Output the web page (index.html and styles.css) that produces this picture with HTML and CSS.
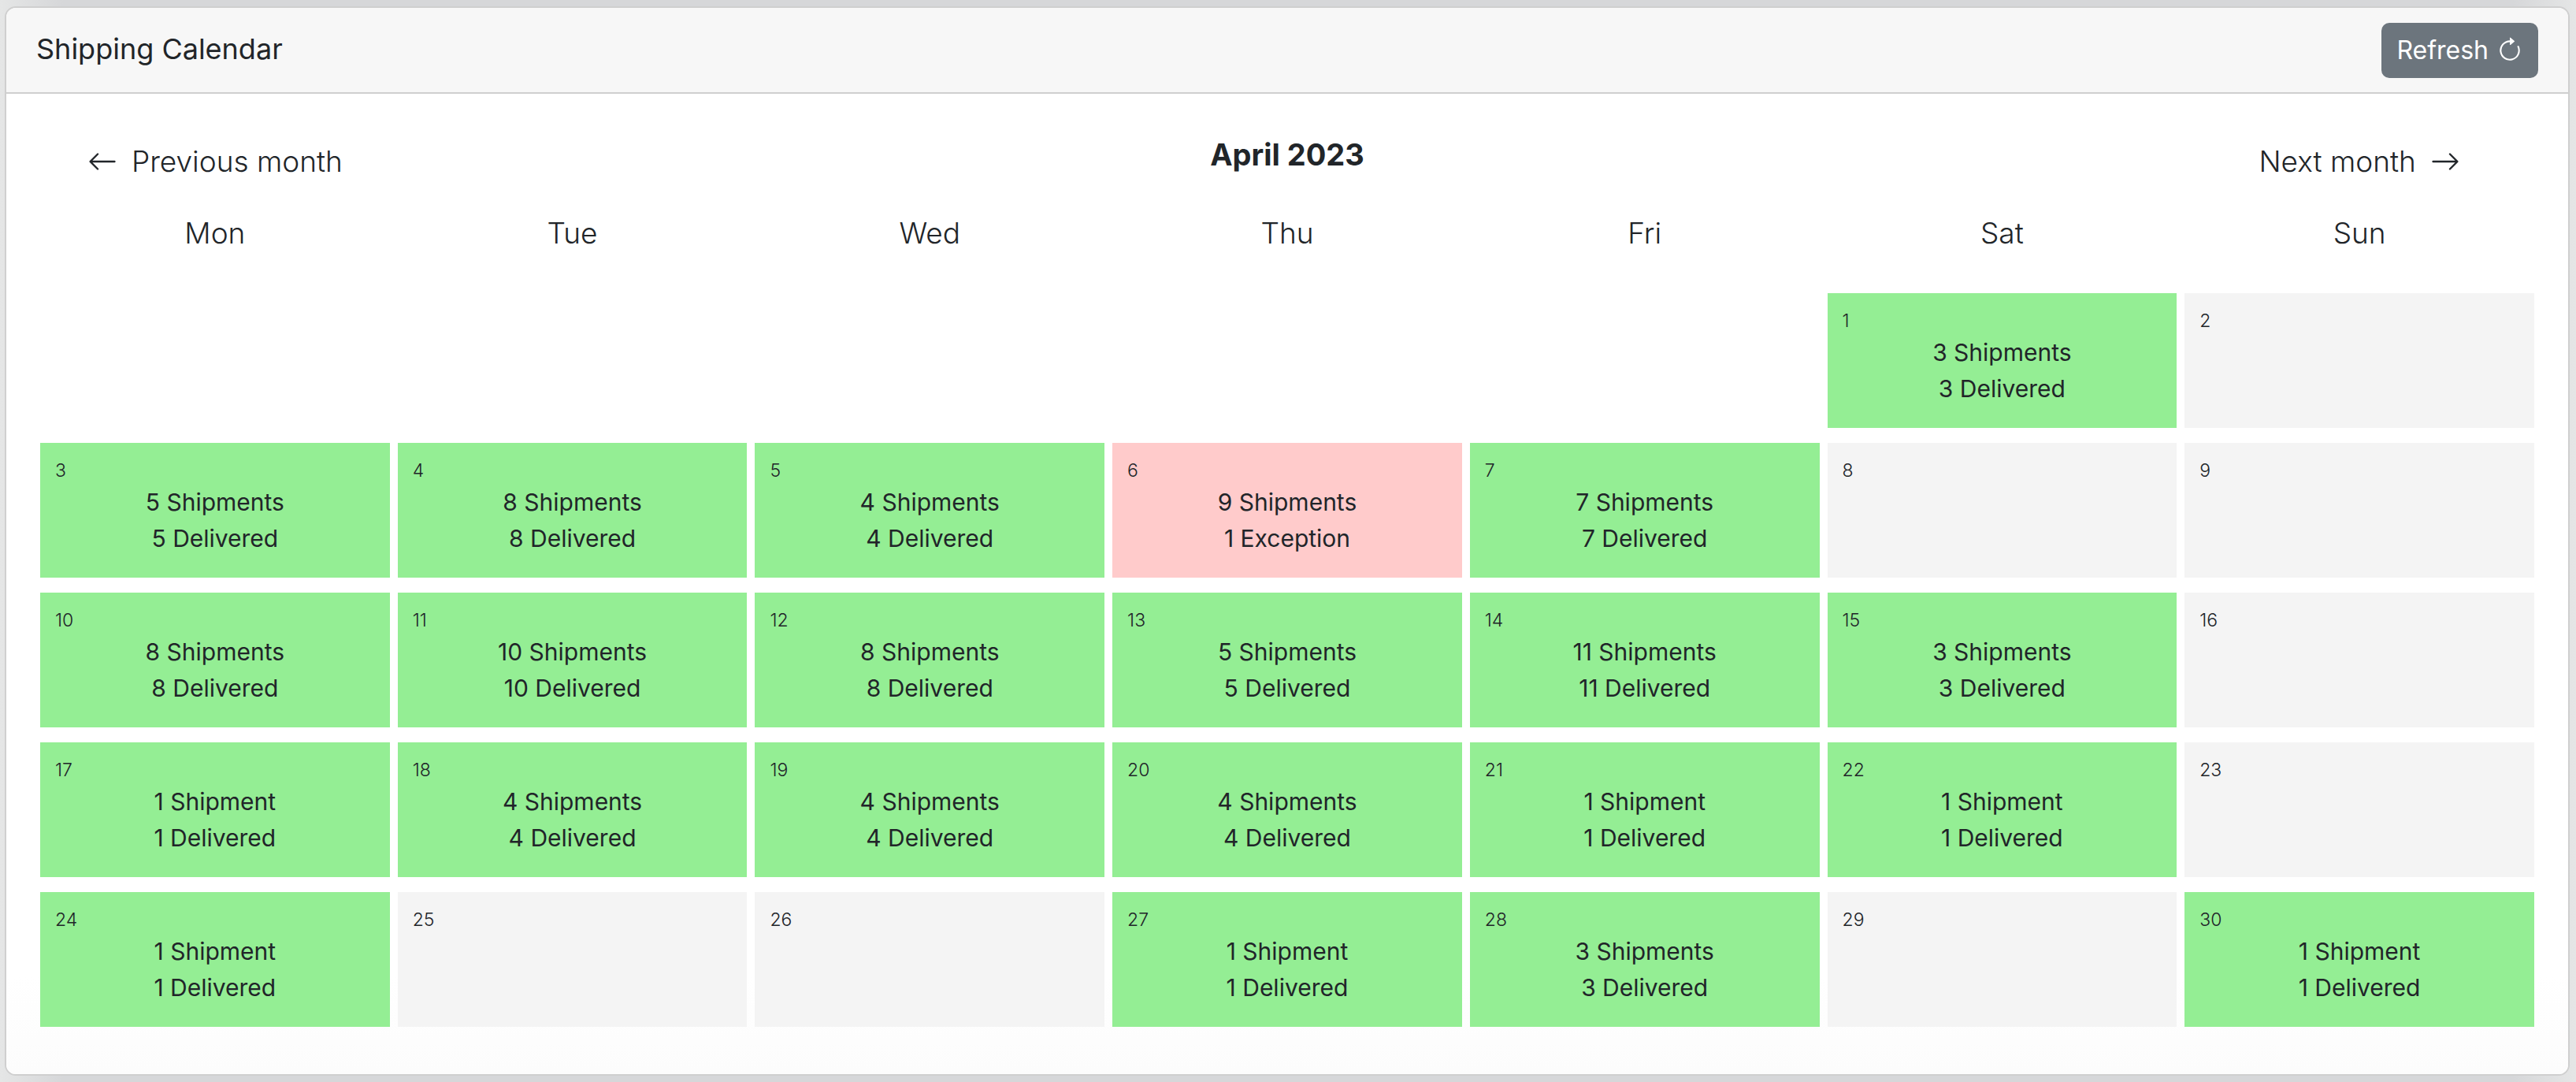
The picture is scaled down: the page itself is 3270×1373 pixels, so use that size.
FILE: index.html
```
<!DOCTYPE html>
<html lang="en">
<head>
<meta charset="utf-8">
<title>Shipping Calendar</title>
<link rel="stylesheet" href="styles.css">
</head>
<body>
<main class="card">
  <header class="card-header">
    <h1 class="card-title">Shipping Calendar</h1>
    <button type="button" class="refresh">Refresh
      <svg class="refresh-icon" viewBox="0 0 16 16" fill="currentColor" aria-hidden="true"><path fill-rule="evenodd" d="M8 3a5 5 0 1 0 4.546 2.914.5.5 0 0 1 .908-.417A6 6 0 1 1 8 2v1z"/><path d="M8 4.466V.534a.25.25 0 0 1 .41-.192l2.36 1.966c.12.1.12.284 0 .384L8.41 4.658A.25.25 0 0 1 8 4.466z"/></svg>
    </button>
  </header>
  <section class="card-body">
    <nav class="month-nav">
      <button type="button" class="month-link">
        <svg class="arrow" viewBox="0 0 16 16" fill="currentColor" aria-hidden="true"><path fill-rule="evenodd" d="M15 8a.5.5 0 0 0-.5-.5H2.707l3.147-3.146a.5.5 0 1 0-.708-.708l-4 4a.5.5 0 0 0 0 .708l4 4a.5.5 0 0 0 .708-.708L2.707 8.5H14.5A.5.5 0 0 0 15 8z"/></svg>
        Previous month
      </button>
      <h2 class="month">April 2023</h2>
      <button type="button" class="month-link">
        Next month
        <svg class="arrow" viewBox="0 0 16 16" fill="currentColor" aria-hidden="true"><path fill-rule="evenodd" d="M1 8a.5.5 0 0 1 .5-.5h11.793l-3.147-3.146a.5.5 0 0 1 .708-.708l4 4a.5.5 0 0 1 0 .708l-4 4a.5.5 0 0 1-.708-.708L13.293 8.5H1.5A.5.5 0 0 1 1 8z"/></svg>
      </button>
    </nav>
    <table class="calendar">
      <thead>
        <tr><th scope="col">Mon</th><th scope="col">Tue</th><th scope="col">Wed</th><th scope="col">Thu</th><th scope="col">Fri</th><th scope="col">Sat</th><th scope="col">Sun</th></tr>
      </thead>
      <tbody>
        <tr>
          <td></td><td></td><td></td><td></td><td></td>
          <td class="day ok"><div class="date">1</div><p>3 Shipments</p><p>3 Delivered</p></td>
          <td class="day"><div class="date">2</div></td>
        </tr>
        <tr>
          <td class="day ok"><div class="date">3</div><p>5 Shipments</p><p>5 Delivered</p></td>
          <td class="day ok"><div class="date">4</div><p>8 Shipments</p><p>8 Delivered</p></td>
          <td class="day ok"><div class="date">5</div><p>4 Shipments</p><p>4 Delivered</p></td>
          <td class="day exception"><div class="date">6</div><p>9 Shipments</p><p>1 Exception</p></td>
          <td class="day ok"><div class="date">7</div><p>7 Shipments</p><p>7 Delivered</p></td>
          <td class="day"><div class="date">8</div></td>
          <td class="day"><div class="date">9</div></td>
        </tr>
        <tr>
          <td class="day ok"><div class="date">10</div><p>8 Shipments</p><p>8 Delivered</p></td>
          <td class="day ok"><div class="date">11</div><p>10 Shipments</p><p>10 Delivered</p></td>
          <td class="day ok"><div class="date">12</div><p>8 Shipments</p><p>8 Delivered</p></td>
          <td class="day ok"><div class="date">13</div><p>5 Shipments</p><p>5 Delivered</p></td>
          <td class="day ok"><div class="date">14</div><p>11 Shipments</p><p>11 Delivered</p></td>
          <td class="day ok"><div class="date">15</div><p>3 Shipments</p><p>3 Delivered</p></td>
          <td class="day"><div class="date">16</div></td>
        </tr>
        <tr>
          <td class="day ok"><div class="date">17</div><p>1 Shipment</p><p>1 Delivered</p></td>
          <td class="day ok"><div class="date">18</div><p>4 Shipments</p><p>4 Delivered</p></td>
          <td class="day ok"><div class="date">19</div><p>4 Shipments</p><p>4 Delivered</p></td>
          <td class="day ok"><div class="date">20</div><p>4 Shipments</p><p>4 Delivered</p></td>
          <td class="day ok"><div class="date">21</div><p>1 Shipment</p><p>1 Delivered</p></td>
          <td class="day ok"><div class="date">22</div><p>1 Shipment</p><p>1 Delivered</p></td>
          <td class="day"><div class="date">23</div></td>
        </tr>
        <tr>
          <td class="day ok"><div class="date">24</div><p>1 Shipment</p><p>1 Delivered</p></td>
          <td class="day"><div class="date">25</div></td>
          <td class="day"><div class="date">26</div></td>
          <td class="day ok"><div class="date">27</div><p>1 Shipment</p><p>1 Delivered</p></td>
          <td class="day ok"><div class="date">28</div><p>3 Shipments</p><p>3 Delivered</p></td>
          <td class="day"><div class="date">29</div></td>
          <td class="day ok"><div class="date">30</div><p>1 Shipment</p><p>1 Delivered</p></td>
        </tr>
      </tbody>
    </table>
  </section>
</main>
</body>
</html>
```
FILE: styles.css
```
* { box-sizing: border-box; }

body {
  margin: 0;
  padding: 8px 8px 8px 6px;
  background: linear-gradient(90deg, #e5e6e6, #d6d7d9 80px, #d6d7d9 calc(100% - 80px), #e5e6e6);
  color: #212529;
  font-family: Inter, "Liberation Sans", sans-serif;
  font-size: 30px;
  line-height: 46px;
}

h1, h2, p { margin: 0; }

button {
  border: 0;
  background: none;
  color: inherit;
  font-family: inherit;
  cursor: pointer;
}

.card {
  border: 2px solid #cfcfcf;
  border-radius: 14px;
  background: #fff;
  overflow: hidden;
}

.card-header {
  display: flex;
  align-items: flex-start;
  justify-content: space-between;
  padding: 19px 38px 18px;
  border-bottom: 2px solid #cfcfcf;
  background: #f7f7f7;
}

.card-title {
  font-size: 36px;
  font-weight: 400;
  line-height: 66px;
}

.refresh {
  display: flex;
  align-items: center;
  gap: 10px;
  padding: 12px 19px;
  border-radius: 10px;
  background: #6c757d;
  color: #fff;
  font-size: 32px;
  line-height: 46px;
}

.refresh-icon {
  width: 34px;
  height: 34px;
}

.card-body {
  padding: 48px 33px 41px;
  background: linear-gradient(#fff 90%, #fcfcfc);
}

.month-nav {
  display: grid;
  grid-template-columns: repeat(7, 1fr);
  gap: 10px;
  padding: 0 10px;
}

.month {
  grid-column: 2 / 7;
  font-size: 38px;
  font-weight: 700;
  line-height: 58px;
  text-align: center;
}

.month-link {
  display: flex;
  align-items: center;
  justify-content: center;
  gap: 18px;
  padding: 9px 0 0;
  font-size: 37px;
  font-weight: 300;
  line-height: 58px;
}

.arrow {
  width: 38px;
  height: 38px;
}

.calendar {
  width: 100%;
  table-layout: fixed;
  border-collapse: separate;
  border-spacing: 10px 19px;
}

.calendar th {
  padding: 0 0 14px;
  font-size: 37px;
  font-weight: 300;
  line-height: 86px;
}

.calendar td {
  height: 171px;
  padding: 18px 19px 27px;
  text-align: center;
  vertical-align: top;
}

.day { background: #f4f4f4; }
.ok { background: #94ee94; }
.exception { background: #ffcbcb; }

.date {
  font-size: 23px;
  font-weight: 300;
  line-height: 34px;
  text-align: left;
}
```
